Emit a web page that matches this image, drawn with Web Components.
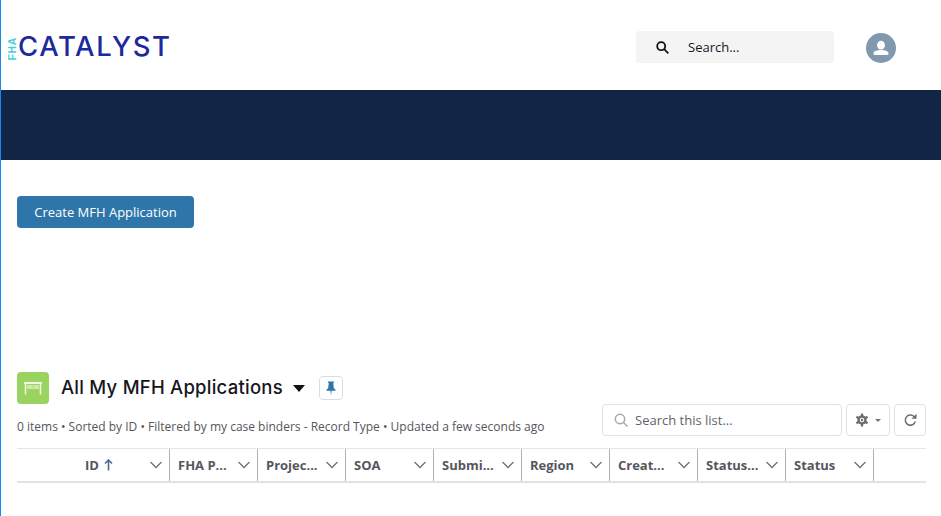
<!DOCTYPE html>
<html>
<head>
<meta charset="utf-8">
<title>FHA Catalyst</title>
<style>
    html, body { margin: 0; padding: 0; background: #fff; }
    body { font-family: "Open Sans", sans-serif; overflow: hidden; height: 516px; }
</style>
</head>
<body>
<catalyst-app></catalyst-app>

<script>
class CatalystHeader extends HTMLElement {
    constructor() {
        super();
        this.attachShadow({ mode: 'open' });
        this.shadowRoot.innerHTML = `
            <style>
                :host { display: flex; align-items: center; height: 90px; box-sizing: border-box; padding: 4px 45px 0 7px; }
                .logo { display: flex; align-items: center; gap: 1px; flex: 1; color: #1d2a9c; margin-top: -2px; }
                .fha { writing-mode: vertical-rl; transform: rotate(180deg); font: 700 10.5px/9px "Liberation Sans", sans-serif; color: #46cfd8; letter-spacing: .6px; margin-top: 5px; }
                .name { font: 500 27.5px/32px Inter, sans-serif; letter-spacing: 1.6px; }
                .search { display: flex; align-items: center; width: 198px; height: 32px; margin-right: 32px; padding-left: 20px; box-sizing: border-box; background: #f4f4f4; border-radius: 3px; font-size: 13px; color: #16161d; }
                .search svg { margin-right: 19px; }
                .avatar { width: 30px; height: 30px; margin-top: 2px; border-radius: 50%; background: #8199af; }
                .avatar svg { display: block; }
            </style>
            <div class="logo"><span class="fha">FHA</span><span class="name">CATALYST</span></div>
            <div class="search">
                <svg width="13" height="13" viewBox="0 0 13 13" fill="none" stroke="#111" stroke-width="1.8"><circle cx="5.2" cy="5.2" r="4"/><path d="M8.2 8.2 12.3 12.3"/></svg>
                <span>Search...</span>
            </div>
            <div class="avatar">
                <svg width="30" height="30" viewBox="0 0 30 30" fill="#fff"><ellipse cx="15" cy="12.2" rx="3.9" ry="4.4"/><path d="M7.5 20.2c0-2.2 4-3.2 7.500-3.200s7.500 1 7.500 3.200v.6c0 .7-.5 1.200-1.200 1.200H8.700c-.7 0-1.200-.5-1.200-1.200z"/></svg>
            </div>
        `;
    }
}

class ActionButton extends HTMLElement {
    constructor() {
        super();
        this.attachShadow({ mode: 'open' });
        this.shadowRoot.innerHTML = `
            <style>
                :host { display: inline-flex; align-items: center; justify-content: center; width: 177px; height: 32px; background: #2e76a9; border-radius: 4px; color: #fff; font-size: 13px; }
            </style>
            <slot></slot>
        `;
    }
}

class ListHeader extends HTMLElement {
    constructor() {
        super();
        this.attachShadow({ mode: 'open' });
        this.shadowRoot.innerHTML = `
            <style>
                :host { display: grid; grid-template-columns: 1fr auto; grid-template-rows: 32px 1fr; height: 76px; }
                .title { display: flex; align-items: center; height: 32px; }
                .badge { width: 32px; height: 32px; border-radius: 4px; background: #9ad35f; margin-right: 12px; }
                .badge svg { display: block; }
                h1 { margin: -2px 10px 0 0; font: 500 18.5px/32px Inter, sans-serif; color: #16161d; letter-spacing: .24px; }
                .caret { width: 0; height: 0; border: 6px solid transparent; border-top: 7px solid #111; border-bottom: 0; margin-right: 14px; }
                .pin { display: flex; align-items: center; justify-content: center; width: 22px; height: 22px; border: 1px solid #d8dde6; border-radius: 4px; }
                .meta { grid-column: 1; font-size: 12px; line-height: 16px; color: #54565c; margin-top: 15px; }
                .tools { grid-column: 2; grid-row: 1 / span 2; display: flex; gap: 4px; margin-top: 32px; align-items: flex-start; }
                .find { display: flex; align-items: center; width: 240px; height: 32px; box-sizing: border-box; padding-left: 11px; background: #fff; border: 1px solid #dfe1e6; border-radius: 4px; font-size: 13px; color: #60636a; }
                .find svg { margin-right: 6px; }
                .tool { display: flex; align-items: center; justify-content: center; height: 32px; box-sizing: border-box; border: 1px solid #dfe1e6; border-radius: 4px; }
                .gear { width: 44px; gap: 6px; }
                .refresh { width: 32px; }
                .small { width: 0; height: 0; border: 3px solid transparent; border-top: 3px solid #777; border-bottom: 0; }
            </style>
            <div class="title">
                <div class="badge">
                    <svg width="32" height="32" viewBox="0 0 32 32" fill="none"><path d="M7 10h18v2H7z" fill="#eef7e2"/><path d="M8.5 12v10.500M23.500 12v10.500" stroke="#eef7e2" stroke-width="1.600"/><path d="M10 13h12v4H10z" fill="#eef7e2" opacity=".6"/><path d="M15 14.500h2v.8h-2z" fill="#9ad35f"/></svg>
                </div>
                <h1>All My MFH Applications</h1>
                <span class="caret"></span>
                <span class="pin">
                    <svg width="12" height="15" viewBox="0 0 12 15" fill="#2e76a9"><path d="M3 0.500h6v1.300H8.200l.6 5.200 1.700 1.700v1.100H6.600L6 14.500l-.6-4.700H1.500V8.700L3.200 7l.6-5.200H3z"/></svg>
                </span>
            </div>
            <div class="meta"><slot></slot></div>
            <div class="tools">
                <div class="find">
                    <svg width="15" height="15" viewBox="0 0 15 15" fill="none" stroke="#a6a6a6" stroke-width="1.500"><circle cx="6" cy="6" r="4.700"/><path d="M9.500 9.500 13.500 13.500"/></svg>
                    <span>Search this list...</span>
                </div>
                <div class="tool gear">
                    <svg width="14" height="14" viewBox="0 0 14 14"><g stroke="#6b6d70" stroke-width="2.200"><path d="M7 .5v13M1.400 3.800l11.200 6.400M12.600 3.800 1.400 10.200"/></g><circle cx="7" cy="7" r="4.700" fill="#6b6d70"/><circle cx="7" cy="7" r="2.300" fill="#fff"/><circle cx="7" cy="7" r="1.200" fill="#6b6d70"/></svg>
                    <span class="small"></span>
                </div>
                <div class="tool refresh">
                    <svg width="15" height="14" viewBox="0 0 15 14" fill="none" stroke="#6b6d70" stroke-width="1.500"><path d="M12.300 8.500A5.100 5.100 0 1 1 10.800 3.300L12.200 4.800"/><path d="M13.500 .8v5H8.500z" fill="#6b6d70" stroke="none"/></svg>
                </div>
            </div>
        `;
    }
}

class ColumnHead extends HTMLElement {
    static get observedAttributes() { return ['label']; }

    constructor() {
        super();
        this.attachShadow({ mode: 'open' });
    }

    connectedCallback() {
        this.render();
    }

    attributeChangedCallback() {
        this.render();
    }

    render = () => {
        const sorted = this.hasAttribute('sorted');
        this.shadowRoot.innerHTML = `
            <style>
                :host { display: flex; align-items: center; box-sizing: border-box; padding: 0 6px 0 8px; border-right: 1px solid #b0b0b0; font-size: 13px; font-weight: 700; color: #54575d; white-space: nowrap; }
                .label { flex: 1; overflow: hidden; }
                :host([sorted]) .label { padding-left: 60px; display: flex; align-items: center; gap: 5px; }
                svg { display: block; flex: none; }
            </style>
            <span class="label">${this.getAttribute('label') || ''}${sorted ? `<svg width="9" height="12" viewBox="0 0 9 12" fill="none" stroke="#4f6a92" stroke-width="1.600"><path d="M4.500 11.500V1.500M1 4.500 4.500 1 8 4.500"/></svg>` : ''}</span>
            <svg width="14" height="8" viewBox="0 0 14 8" fill="none" stroke="#6f7175" stroke-width="1.300"><path d="M1.500 1 7 6.500 12.500 1"/></svg>
        `;
    }
}

class ListTable extends HTMLElement {
    constructor() {
        super();
        this.attachShadow({ mode: 'open' });
        this.shadowRoot.innerHTML = `
            <style>
                :host { display: grid; grid-template-columns: 153px repeat(8, 88px) 1fr; height: 35px; box-sizing: border-box; border-top: 1px solid #e4e5e7; border-bottom: 2px solid #e1e3e6; }
            </style>
            <slot></slot>
        `;
    }
}

class CatalystApp extends HTMLElement {
    constructor() {
        super();
        this.attachShadow({ mode: 'open' });
        this.shadowRoot.innerHTML = `
            <style>
                :host { display: block; height: 516px; box-sizing: border-box; border-left: 1px solid #1589ee; }
                .band { height: 70px; background: #132547; }
                main { padding: 36px 15px 0 16px; }
                .actions { height: 176px; }
            </style>
            <catalyst-header></catalyst-header>
            <div class="band"></div>
            <main>
                <div class="actions"><action-button>Create MFH Application</action-button></div>
                <list-header>0 items • Sorted by ID • Filtered by my case binders - Record Type • Updated a few seconds ago</list-header>
                <list-table>
                    <column-head label="ID" sorted></column-head>
                    <column-head label="FHA P..."></column-head>
                    <column-head label="Projec..."></column-head>
                    <column-head label="SOA"></column-head>
                    <column-head label="Submi..."></column-head>
                    <column-head label="Region"></column-head>
                    <column-head label="Creat..."></column-head>
                    <column-head label="Status..."></column-head>
                    <column-head label="Status"></column-head>
                </list-table>
            </main>
        `;
    }
}

customElements.define('catalyst-header', CatalystHeader);
customElements.define('action-button', ActionButton);
customElements.define('list-header', ListHeader);
customElements.define('column-head', ColumnHead);
customElements.define('list-table', ListTable);
customElements.define('catalyst-app', CatalystApp);
</script>
</body>
</html>
